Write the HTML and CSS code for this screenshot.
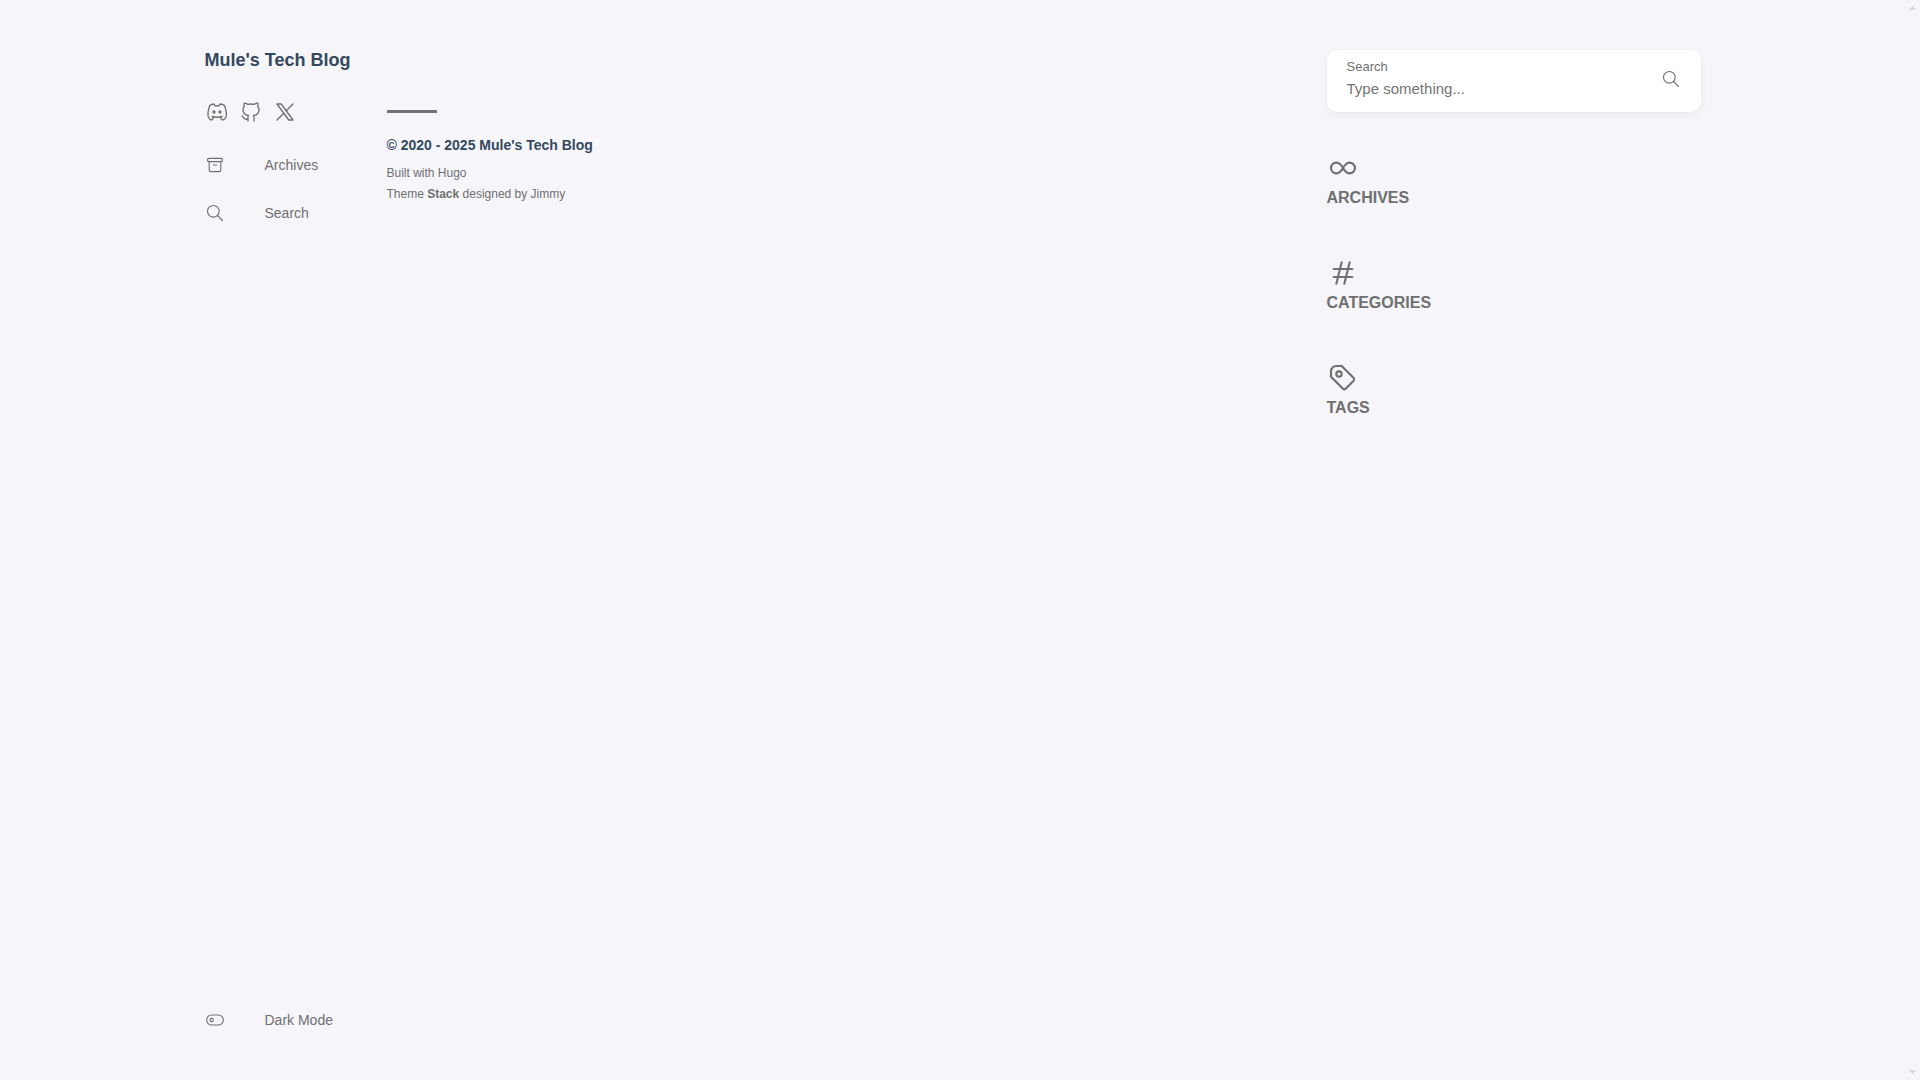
FILE: index.html
```
<!DOCTYPE html>
<html lang="en">
<head>
  <meta charset="UTF-8">
  <meta name="viewport" content="width=device-width, initial-scale=1">
  <title>Mule's Tech Blog</title>
  <link rel="stylesheet" href="styles.css">
</head>
<body>

<div class="container">
  <aside class="left-sidebar">
    <h1 class="site-name"><a href="#">Mule's Tech Blog</a></h1>

    <ul class="menu-social">
      <li>
        <a href="#" aria-label="Discord">
          <svg class="icon" viewBox="0 0 24 24">
            <path d="M8 12a1 1 0 1 0 2 0a1 1 0 0 0 -2 0"/>
            <path d="M14 12a1 1 0 1 0 2 0a1 1 0 0 0 -2 0"/>
            <path d="M8.5 17c0 1 -1.356 3 -1.832 3c-1.429 0 -2.698 -1.667 -3.333 -3c-.635 -1.667 -.476 -5.833 1.428 -11.5c1.388 -1.015 2.782 -1.34 4.237 -1.5l.975 1.923a11.913 11.913 0 0 1 4.053 0l.972 -1.923c1.5 .16 3.043 .485 4.5 1.5c2 5.667 2.167 9.833 1.5 11.5c-.667 1.333 -2 3 -3.5 3c-.5 0 -2 -2 -2 -3"/>
            <path d="M7 16.500c3.500 1 6.500 1 10 0"/>
          </svg>
        </a>
      </li>
      <li>
        <a href="#" aria-label="GitHub">
          <svg class="icon" viewBox="0 0 24 24">
            <path d="M9 19c-4.300 1.400 -4.300 -2.500 -6 -3m12 5v-3.500c0 -1 .1 -1.400 -.5 -2c2.800 -.3 5.500 -1.400 5.500 -6a4.600 4.600 0 0 0 -1.300 -3.200a4.200 4.200 0 0 0 -.1 -3.200s-1.100 -.3 -3.500 1.300a12.300 12.300 0 0 0 -6.200 0c-2.400 -1.600 -3.500 -1.300 -3.500 -1.300a4.200 4.200 0 0 0 -.1 3.200a4.600 4.600 0 0 0 -1.300 3.200c0 4.600 2.700 5.700 5.500 6c-.6 .6 -.6 1.200 -.5 2v3.500"/>
          </svg>
        </a>
      </li>
      <li>
        <a href="#" aria-label="X">
          <svg class="icon" viewBox="0 0 24 24">
            <path d="M4 4l11.733 16h4.267l-11.733 -16z"/>
            <path d="M4 20l6.768 -6.768m2.460 -2.460l6.772 -6.772"/>
          </svg>
        </a>
      </li>
    </ul>

    <nav class="menu">
      <a href="#">
        <svg class="icon" viewBox="0 0 24 24">
          <rect x="3" y="4" width="18" height="4" rx="2"/>
          <path d="M5 8v10a2 2 0 0 0 2 2h10a2 2 0 0 0 2 -2v-10"/>
          <path d="M10 12h4"/>
        </svg>
        <span>Archives</span>
      </a>
      <a href="#">
        <svg class="icon" viewBox="0 0 24 24">
          <circle cx="10" cy="10" r="7"/>
          <path d="M21 21l-6 -6"/>
        </svg>
        <span>Search</span>
      </a>
      <button type="button" class="dark-mode-toggle">
        <svg class="icon" viewBox="0 0 24 24">
          <circle cx="8" cy="12" r="2"/>
          <rect x="2" y="6" width="20" height="12" rx="6"/>
        </svg>
        <span>Dark Mode</span>
      </button>
    </nav>
  </aside>

  <main class="main">
    <footer class="site-footer">
      <p class="copyright">© 2020 - 2025 Mule's Tech Blog</p>
      <p class="powerby">
        Built with <a href="#">Hugo</a><br>
        Theme <b><a href="#">Stack</a></b> designed by <a href="#">Jimmy</a>
      </p>
    </footer>
  </main>

  <aside class="right-sidebar">
    <form class="search-form">
      <p>
        <label for="keyword">Search</label>
        <input type="text" id="keyword" name="keyword" placeholder="Type something...">
      </p>
      <button type="submit" aria-label="Search">
        <svg class="icon" viewBox="0 0 24 24">
          <circle cx="10" cy="10" r="7"/>
          <path d="M21 21l-6 -6"/>
        </svg>
      </button>
    </form>

    <section class="widget">
      <svg class="icon" viewBox="0 0 24 24">
        <path d="M9.828 9.172a4 4 0 1 0 0 5.656a10 10 0 0 0 2.172 -2.828a10 10 0 0 1 2.172 -2.828a4 4 0 1 1 0 5.656a10 10 0 0 1 -2.172 -2.828a10 10 0 0 0 -2.172 -2.828"/>
      </svg>
      <h2>Archives</h2>
    </section>

    <section class="widget">
      <svg class="icon" viewBox="0 0 24 24">
        <path d="M5 9h14M5 15h14M11 4l-4 16M17 4l-4 16"/>
      </svg>
      <h2>Categories</h2>
    </section>

    <section class="widget">
      <svg class="icon" viewBox="0 0 24 24">
        <path d="M11 3l9 9a1.500 1.500 0 0 1 0 2l-6 6a1.500 1.500 0 0 1 -2 0l-9 -9v-4a4 4 0 0 1 4 -4h4"/>
        <circle cx="9" cy="9" r="2"/>
      </svg>
      <h2>Tags</h2>
    </section>
  </aside>
</div>

<div class="scroll-track" aria-hidden="true">
  <svg viewBox="0 0 7 4"><path d="M3 0h1v1h1v1h1v1h1v1H0V3h1V2h1V1h1z"/></svg>
  <svg viewBox="0 0 7 4"><path d="M0 0h7v1H6v1H5v1H4v1H3V3H2V2H1V1H0z"/></svg>
</div>

</body>
</html>
```
FILE: styles.css
```
:root {
  --body-background: #f5f5fa;
  --accent-color: #34495e;
  --text-color: #707070;
  --input-color: #747474;
  --scrollbar-arrow: #d9d9d9;
  --scrollbar-width: 15px;
}

* {
  box-sizing: border-box;
}

body {
  margin: 0;
  padding-right: var(--scrollbar-width);
  background: var(--body-background);
  color: var(--text-color);
  font-family: "Liberation Sans", Arial, sans-serif;
  font-size: 14px;
}

a {
  color: inherit;
  text-decoration: none;
}

h1, h2, p, ul {
  margin: 0;
  padding: 0;
}

.icon {
  display: block;
  width: 20px;
  height: 20px;
  fill: none;
  stroke: currentColor;
  stroke-width: 1.33;
  stroke-linecap: round;
  stroke-linejoin: round;
}

.container {
  display: flex;
  gap: 30px;
  max-width: 1536px;
  margin: 0 auto;
  padding: 0 20px;
}

/* Left sidebar */
.left-sidebar {
  position: sticky;
  top: 0;
  flex: 0 0 152px;
  display: flex;
  flex-direction: column;
  height: 100vh;
  padding: 50px 0;
}

.site-name {
  color: var(--accent-color);
  font-size: 18px;
  line-height: 20px;
  white-space: nowrap;
}

.menu-social {
  display: flex;
  gap: 10px;
  margin-top: 30px;
  list-style: none;
}

.menu-social .icon {
  width: 24px;
  height: 24px;
}

.menu {
  flex: 1;
  display: flex;
  flex-direction: column;
  gap: 28px;
  margin-top: 31px;
}

.menu a,
.dark-mode-toggle {
  display: flex;
  align-items: center;
  gap: 40px;
}

.dark-mode-toggle {
  margin-top: auto;
  padding: 0;
  border: 0;
  background: none;
  color: inherit;
  font: inherit;
  cursor: pointer;
}

/* Main column */
.main {
  flex: 1;
  min-width: 0;
  padding-top: 110px;
}

.site-footer::before {
  content: "";
  display: block;
  width: 50px;
  height: 3px;
  margin-bottom: 20px;
  background: var(--text-color);
}

.copyright {
  margin-bottom: 6px;
  color: var(--accent-color);
  font-weight: bold;
  line-height: 24px;
}

.powerby {
  font-size: 12px;
  line-height: 21px;
}

/* Right sidebar */
.right-sidebar {
  flex: 0 0 25%;
  display: flex;
  flex-direction: column;
  gap: 40px;
  padding: 50px 0;
}

.search-form {
  position: relative;
}

.search-form p {
  position: relative;
}

.search-form label {
  position: absolute;
  top: 9px;
  left: 20px;
  font-size: 13px;
}

.search-form input {
  display: block;
  width: 100%;
  padding: 30px 60px 15px 20px;
  border: 0;
  border-radius: 10px;
  background: #fff;
  box-shadow: 0 4px 8px rgba(0, 0, 0, 0.04), 0 0 2px rgba(0, 0, 0, 0.06);
  color: inherit;
  font: inherit;
  font-size: 15px;
}

.search-form input::placeholder {
  color: var(--input-color);
}

.search-form button {
  position: absolute;
  top: 0;
  right: 0;
  height: 100%;
  padding: 0 20px 4px;
  border: 0;
  background: none;
  color: inherit;
  cursor: pointer;
}

.widget .icon {
  width: 32px;
  height: 32px;
  stroke-width: 1.6;
}

.widget h2 {
  margin: 2px 0 7px;
  font-size: 16px;
  line-height: 24px;
  text-transform: uppercase;
}

/* Scroll track, always over the right edge of the window */
.scroll-track {
  position: fixed;
  top: 0;
  right: 0;
  bottom: 0;
  width: var(--scrollbar-width);
  display: flex;
  flex-direction: column;
  justify-content: space-between;
  align-items: center;
  padding: 6px 0;
}

.scroll-track svg {
  width: 7px;
  height: 4px;
  fill: var(--scrollbar-arrow);
  shape-rendering: crispEdges;
}
```
